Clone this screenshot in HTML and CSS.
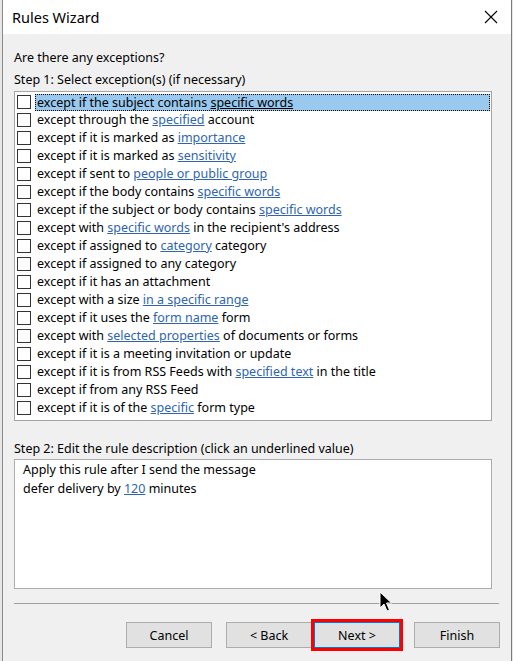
FILE: index.html
```html
<!DOCTYPE html>
<html>
<head>
<meta charset="utf-8">
<link rel="stylesheet" href="styles.css">
</head>
<body>
<div class="window">
  <div class="titlebar">
    <span class="title">Rules Wizard</span>
    <svg class="close" width="14" height="14" viewBox="0 0 14 14"><path d="M1 1 L13 13 M13 1 L1 13" stroke="#000" stroke-width="1.1" fill="none"/></svg>
  </div>
  <div class="content">
    <div class="label q">Are there any exceptions?</div>
    <div class="label">Step 1: Select exception(s) (if necessary)</div>
    <div class="listbox">
      <div class="row"><span class="cb"></span><span class="txt sel">except if the subject contains <u>specific words</u></span></div>
      <div class="row"><span class="cb"></span><span class="txt">except through the <a>specified</a> account</span></div>
      <div class="row"><span class="cb"></span><span class="txt">except if it is marked as <a>importance</a></span></div>
      <div class="row"><span class="cb"></span><span class="txt">except if it is marked as <a>sensitivity</a></span></div>
      <div class="row"><span class="cb"></span><span class="txt">except if sent to <a>people or public group</a></span></div>
      <div class="row"><span class="cb"></span><span class="txt">except if the body contains <a>specific words</a></span></div>
      <div class="row"><span class="cb"></span><span class="txt">except if the subject or body contains <a>specific words</a></span></div>
      <div class="row"><span class="cb"></span><span class="txt">except with <a>specific words</a> in the recipient's address</span></div>
      <div class="row"><span class="cb"></span><span class="txt">except if assigned to <a>category</a> category</span></div>
      <div class="row"><span class="cb"></span><span class="txt">except if assigned to any category</span></div>
      <div class="row"><span class="cb"></span><span class="txt">except if it has an attachment</span></div>
      <div class="row"><span class="cb"></span><span class="txt">except with a size <a>in a specific range</a></span></div>
      <div class="row"><span class="cb"></span><span class="txt">except if it uses the <a>form name</a> form</span></div>
      <div class="row"><span class="cb"></span><span class="txt">except with <a>selected properties</a> of documents or forms</span></div>
      <div class="row"><span class="cb"></span><span class="txt">except if it is a meeting invitation or update</span></div>
      <div class="row"><span class="cb"></span><span class="txt">except if it is from RSS Feeds with <a>specified text</a> in the title</span></div>
      <div class="row"><span class="cb"></span><span class="txt">except if from any RSS Feed</span></div>
      <div class="row"><span class="cb"></span><span class="txt">except if it is of the <a>specific</a> form type</span></div>
    </div>
    <div class="label step2">Step 2: Edit the rule description (click an underlined value)</div>
    <div class="desc">
      <div>Apply this rule after I send the message</div>
      <div>defer delivery by <a>120</a> minutes</div>
    </div>
    <div class="sep"></div>
    <div class="buttons">
      <button class="btn cancel">Cancel</button>
      <button class="btn">&lt; Back</button>
      <button class="btn next">Next &gt;</button>
      <button class="btn finish">Finish</button>
    </div>
  </div>
  <svg class="cursor" width="14" height="22" viewBox="0 0 14 22"><path d="M1 1 L1 17 L5 13 L8 20 L10.5 19 L7.5 12 L12.5 12 Z" fill="#000" stroke="#fff" stroke-width="1" stroke-linejoin="round"/></svg>
</div>
</body>
</html>
```
FILE: styles.css
```css
html, body {
  margin: 0;
  padding: 0;
}
body {
  background: #e6e6e6;
  width: 513px;
  height: 661px;
  overflow: hidden;
  font-family: "Noto Sans", "Open Sans", sans-serif;
  font-size: 12.5px;
  color: #000;
}
.window {
  position: relative;
  margin-left: 2px;
  width: 508px;
  height: 661px;
  border-left: 1px solid #8a8a8a;
  border-right: 1px solid #7a7a7a;
  background: #f0f0f0;
  display: flex;
  flex-direction: column;
}
.titlebar {
  height: 34px;
  background: #fff;
  display: flex;
  align-items: center;
  justify-content: space-between;
  padding: 0 13px 0 9px;
  box-sizing: border-box;
}
.title {
  font-size: 14.5px;
  line-height: 20px;
  margin-top: -1px;
}
.close {
  display: block;
  margin-top: -1px;
}
.content {
  padding: 15px 0 0 11px;
  display: flex;
  flex-direction: column;
}
.label {
  line-height: 18px;
  height: 18px;
  white-space: nowrap;
}
.q {
  margin-bottom: 4px;
}
.listbox {
  margin-top: 2px;
  width: 476px;
  height: 326px;
  border: 1px solid #a5a5a5;
  background: #fff;
  padding: 1px 0;
  box-sizing: content-box;
}
.row {
  height: 18px;
  display: flex;
  align-items: center;
  padding-left: 2px;
}
.cb {
  width: 12px;
  height: 12px;
  border: 1px solid #333;
  background: #fff;
  flex: none;
}
.txt {
  margin-left: 4px;
  padding-left: 2px;
  height: 18px;
  line-height: 18px;
  white-space: nowrap;
  box-sizing: border-box;
}
.txt.sel {
  flex: 1;
  margin-right: 1px;
  background: #99c9ef;
  outline: 1px dotted #000;
  outline-offset: -1px;
  height: 17px;
  line-height: 17px;
  margin-top: 1px;
}
a {
  color: #2f65ad;
  text-decoration: underline;
}
u {
  text-decoration: underline;
}
.step2 {
  margin-top: 19px;
}
.desc {
  margin-top: 1px;
  border: 1px solid #adadad;
  background: #fff;
  padding: 0 0 0 8px;
  box-sizing: border-box;
  width: 478px;
  height: 130px;
  line-height: 19px;
}
.sep {
  margin-top: 14px;
  width: 485px;
  height: 1px;
  background: #a0a0a0;
}
.buttons {
  margin-top: 18px;
  display: flex;
  justify-content: flex-end;
  width: 486px;
}
.btn {
  width: 86px;
  height: 26px;
  background: #e1e1e1;
  border: 1px solid #adadad;
  font-family: inherit;
  font-size: 12.5px;
  color: #000;
  padding: 0;
  margin: 0;
}
.cancel {
  margin-right: 14px;
}
.next {
  margin-left: 2px;
  border-color: #0078d7;
  outline: 3px solid #f00;
  outline-offset: 0;
}
.finish {
  margin-left: 14px;
}
.cursor {
  position: absolute;
  left: 376px;
  top: 591px;
}
```
